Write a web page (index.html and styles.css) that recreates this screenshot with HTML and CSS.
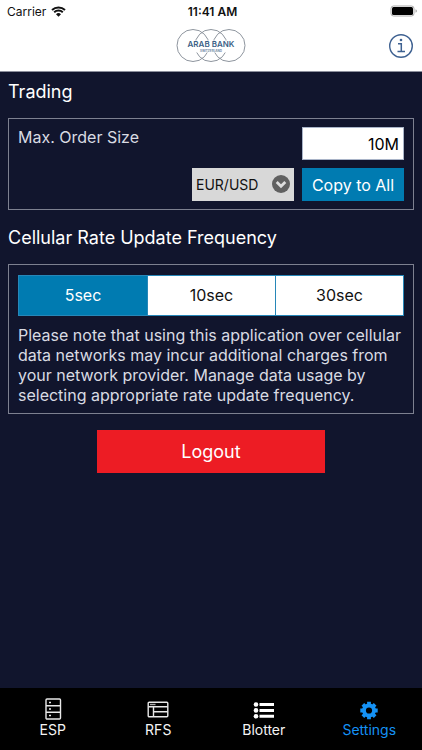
FILE: index.html
```html
<!DOCTYPE html>
<html lang="en">
<head>
<meta charset="utf-8">
<meta name="viewport" content="width=device-width, initial-scale=1">
<title>Settings</title>
<link rel="stylesheet" href="styles.css">
</head>
<body>
<div class="app">
  <div class="status">
    <div class="carrier">
      <span>Carrier</span>
      <svg width="15" height="11" viewBox="0 0 15 11" aria-hidden="true">
        <path d="M1 4A9.500 9.500 0 0 1 14 4M3.200 6.300A6.300 6.300 0 0 1 11.800 6.300" fill="none" stroke="#111" stroke-width="2"/>
        <path d="M7.500 10.800 5 8.300a3.600 3.600 0 0 1 5 0z" fill="#111"/>
      </svg>
    </div>
    <span class="time">11:41 AM</span>
    <svg class="battery" width="28" height="12" viewBox="0 0 28 12" aria-hidden="true">
      <rect x="1" y="1" width="23" height="10" rx="2.500" fill="#fff" stroke="#aaa"/>
      <rect x="2" y="2" width="21" height="8" rx="1.500" fill="#000"/>
      <path d="M25.500 4.200q1.500.6 1.500 1.800t-1.500 1.800z" fill="#aaa"/>
    </svg>
  </div>
  <header class="header">
    <svg class="logo" width="72" height="36" viewBox="0 0 72 36" role="img" aria-label="Arab Bank Switzerland">
      <g fill="none" stroke="#8e959e">
        <circle cx="18" cy="16.500" r="16"/>
        <circle cx="36" cy="16.500" r="16"/>
        <circle cx="54" cy="16.500" r="16"/>
      </g>
      <rect x="12" y="11.500" width="48" height="12" fill="#fff"/>
      <text class="logo-name" x="36" y="18" text-anchor="middle">ARAB BANK</text>
      <text class="logo-sub" x="36" y="23" text-anchor="middle">SWITZERLAND</text>
    </svg>
    <button class="info" type="button" aria-label="Information">
      <svg width="26" height="26" viewBox="0 0 26 26" aria-hidden="true">
        <circle cx="13" cy="12" r="11.300" fill="none" stroke="#3e6191" stroke-width="1.400"/>
        <circle cx="13" cy="6" r="1.300" fill="#3e6191"/>
        <path d="M10 9.800h3.300v7.700M9.500 17.500h7.500" fill="none" stroke="#3e6191" stroke-width="1.500"/>
      </svg>
    </button>
  </header>

  <main class="content">
    <h2>Trading</h2>
    <section class="panel order">
      <label class="order-label" for="size">Max. Order Size</label>
      <input class="size" id="size" type="text" value="10M">
      <div class="pair">
        <select id="pair" aria-label="Currency pair"><option>EUR/USD</option></select>
        <svg class="chevron" width="18" height="18" viewBox="0 0 18 18" aria-hidden="true">
          <circle cx="9" cy="9" r="9" fill="#606060"/>
          <path d="M4.700 7 9 11.200 13.300 7" fill="none" stroke="#ddd" stroke-width="2.800"/>
        </svg>
      </div>
      <button class="copy" type="button">Copy to All</button>
    </section>

    <h2>Cellular Rate Update Frequency</h2>
    <section class="panel rate">
      <div class="segments">
        <label><input type="radio" name="rate" checked><span>5sec</span></label>
        <label><input type="radio" name="rate"><span>10sec</span></label>
        <label><input type="radio" name="rate"><span>30sec</span></label>
      </div>
      <p class="note">Please note that using this application over cellular data networks may incur additional charges from your network provider. Manage data usage by selecting appropriate rate update frequency.</p>
    </section>
    <button class="logout" type="button">Logout</button>
  </main>

  <nav class="tabs">
    <a href="#esp">
      <svg width="22" height="22" viewBox="0 0 22 22" fill="none" stroke="#e8e8e8" stroke-width="1.400" aria-hidden="true">
        <rect x="4" y="1" width="14.500" height="20" rx="1"/>
        <path d="M4 7.800h14.500M4 14.300h14.500"/>
        <path d="M7 4.500h2M7 11h2M7 17.500h2" stroke-width="1.400"/>
      </svg>
      <span>ESP</span>
    </a>
    <a href="#rfs">
      <svg width="22" height="22" viewBox="0 0 22 22" fill="none" stroke="#e8e8e8" stroke-width="1.400" aria-hidden="true">
        <rect x="1.200" y="4.200" width="19.600" height="14.600" rx="1"/>
        <path d="M1.200 8.800h19.600M6.500 8.800v10M6.500 13.800h14.300"/>
        <path d="M3 6.500h5.500" stroke="#aaa"/>
      </svg>
      <span>RFS</span>
    </a>
    <a href="#blotter">
      <svg width="22" height="22" viewBox="0 0 22 22" fill="#fff" aria-hidden="true">
        <circle cx="3" cy="6.500" r="2.300"/><circle cx="3" cy="12.400" r="2.300"/><circle cx="3" cy="18.300" r="2.300"/>
        <path d="M6.500 5H21v3H6.500zM6.500 10.900H21v3H6.500zM6.500 16.800H21v3H6.500z"/>
      </svg>
      <span>Blotter</span>
    </a>
    <a class="active" href="#settings" aria-current="page">
      <svg width="22" height="22" viewBox="0 0 22 22" fill="none" stroke="#1592f5" aria-hidden="true">
        <circle cx="11" cy="12.500" r="5" stroke-width="3.800"/>
        <path d="M11 3.800v3M11 18.200v3M2.300 12.500h3M16.700 12.500h3M4.850 6.350l2 2M15.150 16.650l2 2M4.850 18.650l2-2M15.150 8.350l2-2" stroke-width="3.800"/>
      </svg>
      <span>Settings</span>
    </a>
  </nav>
</div>
</body>
</html>
```
FILE: styles.css
```css
* {
  box-sizing: border-box;
}

body {
  margin: 0;
  background: #11152d;
  font-family: Inter, "Liberation Sans", sans-serif;
  font-size: 16px;
  color: #fff;
}

button,
input,
select {
  font: inherit;
  border: 0;
  border-radius: 0;
  margin: 0;
}

.app {
  display: flex;
  flex-direction: column;
  min-height: 100vh;
}

.status {
  display: grid;
  grid-template-columns: 1fr auto 1fr;
  align-items: center;
  height: 22px;
  padding: 0 4px 0 7px;
  background: #fff;
  color: #111;
  font-size: 12px;
}

.carrier {
  display: flex;
  align-items: center;
  gap: 5px;
}

.time {
  font-weight: 600;
}

.battery {
  justify-self: end;
}

.header {
  display: grid;
  grid-template-columns: 1fr auto 1fr;
  align-items: center;
  height: 50px;
  padding: 0 8px;
  background: #fff;
  border-bottom: 1px solid #8c8f9c;
}

.logo {
  grid-column: 2;
}

.logo-name {
  font-size: 8px;
  font-weight: 600;
  fill: #3c5f86;
}

.logo-sub {
  font-size: 3px;
  font-weight: 700;
  fill: #6f87a3;
}

.info {
  display: flex;
  justify-self: end;
  padding: 0;
  background: none;
}

.content {
  flex: 1;
  padding: 8px;
}

h2 {
  margin: 0 0 15px;
  font-size: 18px;
  line-height: 23px;
  font-weight: 400;
}

.panel {
  margin-bottom: 16px;
  padding: 8px 9px;
  border: 1px solid #7d8090;
}

.order {
  display: grid;
  grid-template-columns: 1fr 102px 102px;
  gap: 8px;
}

.rate {
  padding-top: 10px;
}

.order-label {
  grid-column: 1 / 3;
  line-height: 20px;
  color: #d9dbe3;
}

.size {
  width: 100%;
  height: 33px;
  padding: 0 4px;
  border: 1px solid #a9b4c8;
  background: #fff;
  color: #000;
  text-align: right;
}

.pair {
  position: relative;
  grid-column: 2;
}

.pair select {
  appearance: none;
  width: 100%;
  height: 33px;
  padding: 0 4px;
  background: #d8d8d8;
  color: #111;
  font-size: 14px;
}

.chevron {
  position: absolute;
  top: 7px;
  right: 4px;
  pointer-events: none;
}

.copy {
  height: 33px;
  padding: 0;
  background: #007bb1;
  color: #fff;
}

.segments {
  display: grid;
  grid-template-columns: repeat(3, 1fr);
  border: 1px solid #2787b8;
}

.segments label {
  position: relative;
  background: #fff;
  color: #111;
  line-height: 39px;
  text-align: center;
}

.segments label + label {
  border-left: 1px solid #2787b8;
}

.segments label:has(:checked) {
  background: #007bb1;
  color: #fff;
}

.segments input {
  position: absolute;
  opacity: 0;
}

.note {
  margin: 9px 0 0;
  line-height: 20px;
  color: #d9dbe3;
}

.logout {
  display: block;
  width: 56%;
  height: 43px;
  margin: 0 auto;
  background: #ed1c24;
  color: #fff;
  font-size: 18px;
}

.tabs {
  display: grid;
  grid-template-columns: repeat(4, 1fr);
  height: 62px;
  padding-top: 10px;
  background: #000;
}

.tabs a {
  display: flex;
  flex-direction: column;
  align-items: center;
  color: #f4f4f4;
  font-size: 14px;
  line-height: 20px;
  text-decoration: none;
}

.tabs .active {
  color: #1592f5;
}
```
